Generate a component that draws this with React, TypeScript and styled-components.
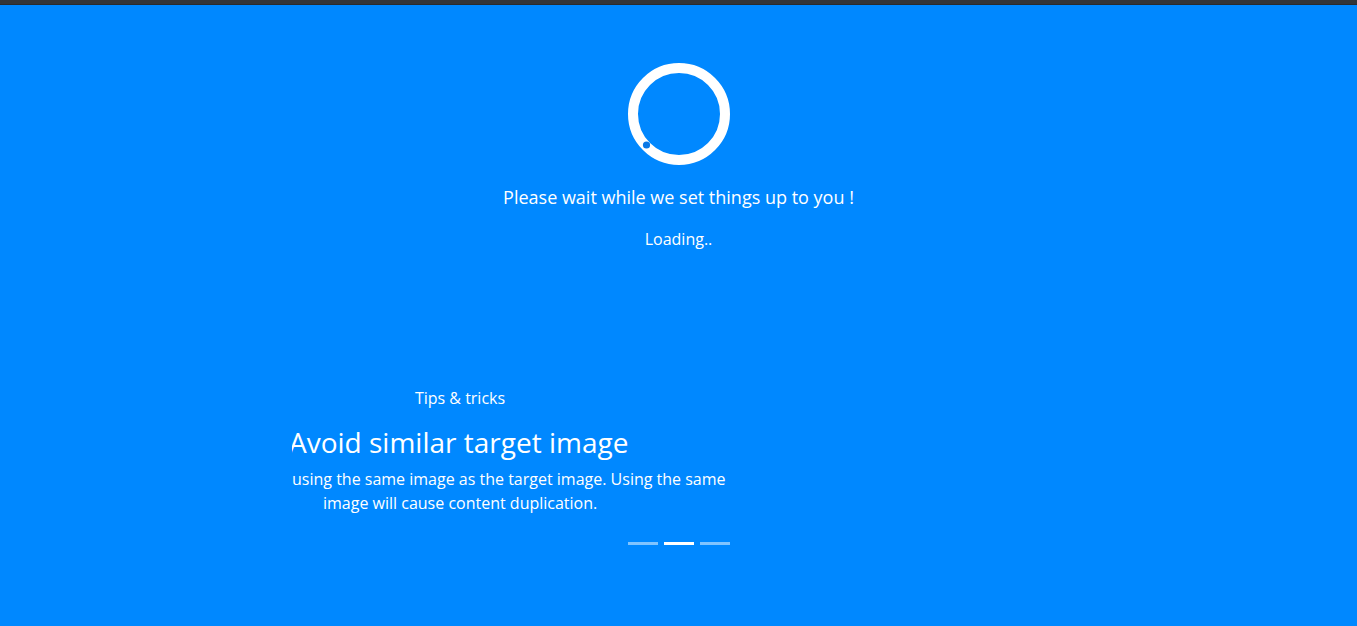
import React from "react";
import styled, { createGlobalStyle } from "styled-components";

const Global = createGlobalStyle`
  html, body { margin: 0; padding: 0; background: #0088ff; }
  body { font-family: "Open Sans", "Noto Sans", sans-serif; color: #fff; }
`;

const Page = styled.div`
  width: 1357px;
  height: 626px;
  background: #0088ff;
  display: flex;
  flex-direction: column;
  overflow: hidden;
`;

const TopBar = styled.div`
  height: 4px;
  background: #333539;
  border-bottom: 1px solid #2a2b2e;
`;

const Loader = styled.section`
  display: flex;
  flex-direction: column;
  align-items: center;
  padding-top: 58px;
`;

const Spinner = styled.svg`
  display: block;
  width: 102px;
  height: 102px;
`;

const Message = styled.p`
  margin: 20px 0 0;
  font-size: 18px;
  line-height: 24px;
  color: #fff;
`;

const Status = styled.p`
  margin: 20px 0 0;
  font-size: 16px;
  line-height: 20px;
  color: #fff;
`;

const Tips = styled.section`
  display: flex;
  flex-direction: column;
  margin-top: 139px;
`;

const Viewport = styled.div`
  margin-left: 292px;
  width: 450px;
  overflow: hidden;
`;

const TipsLabel = styled.div`
  width: 336px;
  text-align: center;
  font-size: 16px;
  line-height: 20px;
`;

const Heading = styled.h2`
  margin: 17px 0 0 -3px;
  font-size: 28px;
  font-weight: 400;
  line-height: 34px;
  white-space: nowrap;
`;

const Body = styled.p`
  margin: 8px 0 0;
  font-size: 16px;
  line-height: 24px;
  white-space: nowrap;
`;

const Line = styled.span<{ $indent?: number }>`
  display: block;
  padding-left: ${(p) => p.$indent ?? 0}px;
`;

const Dots = styled.div`
  display: flex;
  justify-content: center;
  gap: 6px;
  margin-top: 27px;
`;

const Dot = styled.span<{ $active?: boolean }>`
  width: 30px;
  height: 3px;
  background: ${(p) => (p.$active ? "#ffffff" : "rgba(255,255,255,0.5)")};
`;

export default function App() {
  return (
    <>
      <Global />
      <Page>
        <TopBar />
        <Loader>
          <Spinner viewBox="0 0 102 102">
            <circle cx="51" cy="51" r="46" fill="none" stroke="#ffffff" strokeWidth="10" />
            <circle cx="18.5" cy="82" r="3.6" fill="#0a78e6" />
          </Spinner>
          <Message>Please wait while we set things up to you !</Message>
          <Status>Loading..</Status>
        </Loader>
        <Tips>
          <Viewport>
            <TipsLabel>Tips &amp; tricks</TipsLabel>
            <Heading>Avoid similar target image</Heading>
            <Body>
              <Line>using the same image as the target image. Using the same</Line>
              <Line $indent={31}>image will cause content duplication.</Line>
            </Body>
          </Viewport>
          <Dots>
            <Dot />
            <Dot $active />
            <Dot />
          </Dots>
        </Tips>
      </Page>
    </>
  );
}
